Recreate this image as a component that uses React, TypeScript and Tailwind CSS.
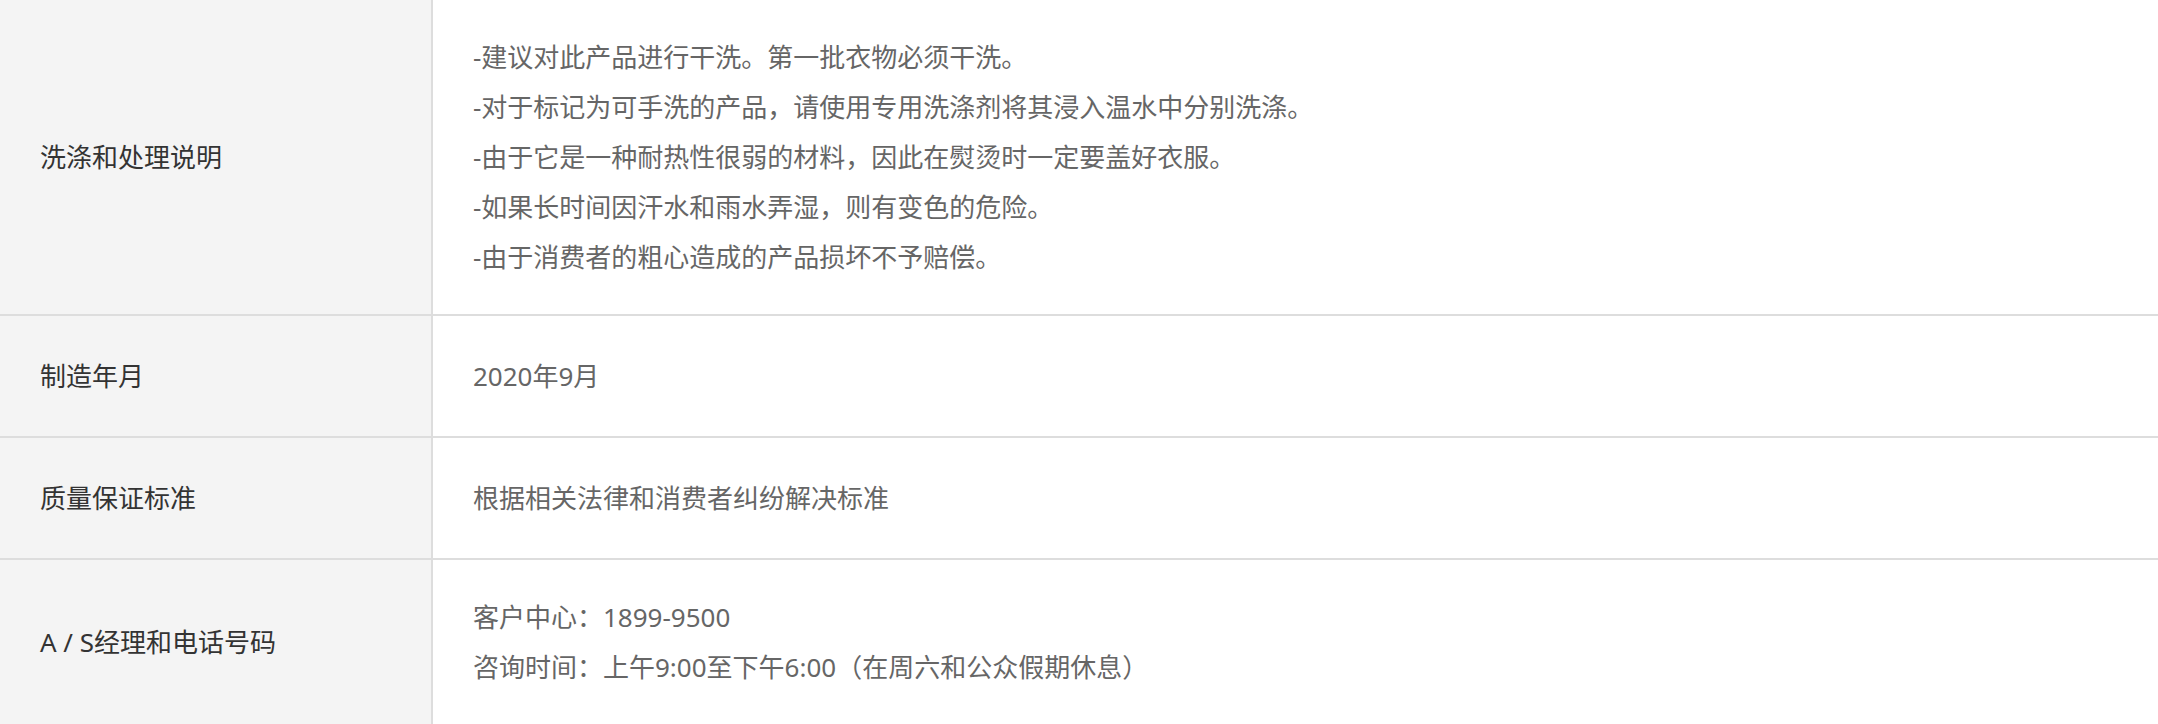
const rows: { label: string; lines: string[] }[] = [
  {
    label: '洗涤和处理说明',
    lines: [
      '-建议对此产品进行干洗。第一批衣物必须干洗。',
      '-对于标记为可手洗的产品，请使用专用洗涤剂将其浸入温水中分别洗涤。',
      '-由于它是一种耐热性很弱的材料，因此在熨烫时一定要盖好衣服。',
      '-如果长时间因汗水和雨水弄湿，则有变色的危险。',
      '-由于消费者的粗心造成的产品损坏不予赔偿。',
    ],
  },
  { label: '制造年月', lines: ['2020年9月'] },
  { label: '质量保证标准', lines: ['根据相关法律和消费者纠纷解决标准'] },
  {
    label: 'A / S经理和电话号码',
    lines: ['客户中心：1899-9500', '咨询时间：上午9:00至下午6:00（在周六和公众假期休息）'],
  },
];

export default function App() {
  return (
    <div className="w-full h-[724px] overflow-hidden bg-white font-['Noto_Sans','Noto_Sans_CJK_SC',sans-serif] text-[26px]">
      {rows.map((row, i) => (
        <div
          key={row.label}
          className={`flex ${i < rows.length - 1 ? 'border-b-2 border-[#dddddd]' : ''}`}
        >
          <div className="w-[433px] shrink-0 flex items-center px-10 bg-[#f4f4f4] border-r-2 border-[#dddddd] text-[#333333] leading-[50px]">
            {row.label}
          </div>
          <div className="flex-1 min-h-[120px] flex flex-col justify-center px-10 py-8 text-[#666666] leading-[50px]">
            {row.lines.map((line) => (
              <p key={line}>{line}</p>
            ))}
          </div>
        </div>
      ))}
    </div>
  );
}
